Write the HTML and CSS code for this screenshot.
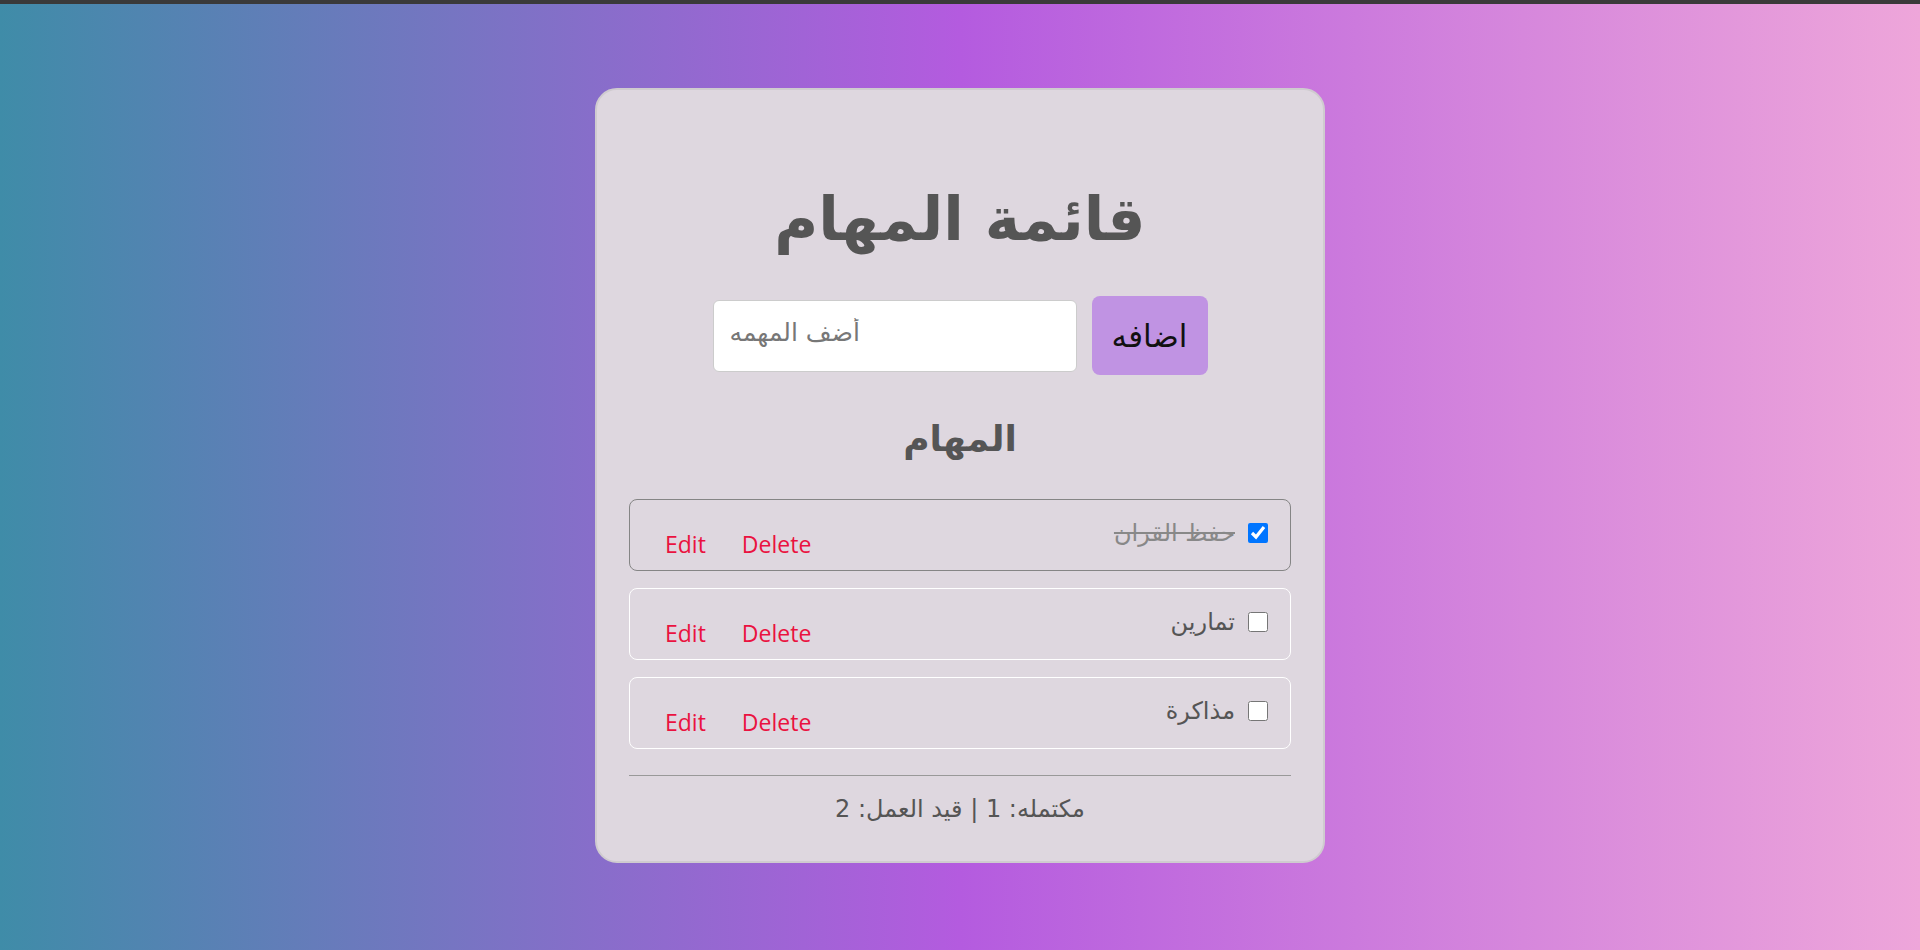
FILE: index.html
```html
<!DOCTYPE html>
<html lang="ar" dir="rtl">
<head>
<meta charset="utf-8">
<title>قائمة المهام</title>
<link rel="stylesheet" href="styles.css">
</head>
<body>
<div class="topbar"></div>
<main class="card">
  <h1 class="title">قائمة المهام</h1>
  <div class="add-row">
    <button class="add-btn">اضافه</button>
    <input class="task-input" type="text" placeholder="أضف المهمه">
  </div>
  <h2 class="subtitle">المهام</h2>
  <ul class="tasks">
    <li class="task done">
      <label class="task-label"><input type="checkbox" class="check" checked><span class="task-text">حفظ القران</span></label>
      <div class="actions"><button class="act">Edit</button><button class="act">Delete</button></div>
    </li>
    <li class="task">
      <label class="task-label"><input type="checkbox" class="check"><span class="task-text">تمارين</span></label>
      <div class="actions"><button class="act">Edit</button><button class="act">Delete</button></div>
    </li>
    <li class="task">
      <label class="task-label"><input type="checkbox" class="check"><span class="task-text">مذاكرة</span></label>
      <div class="actions"><button class="act">Edit</button><button class="act">Delete</button></div>
    </li>
  </ul>
  <hr class="divider">
  <p class="summary">مكتمله: 1 | قيد العمل: 2</p>
</main>
</body>
</html>
```
FILE: styles.css
```css
* { box-sizing: border-box; }
html, body { margin: 0; padding: 0; }
body {
  min-height: 100vh;
  background: linear-gradient(to right, #3f8ca8 0%, #b45bdf 50%, #eea6da 100%);
  font-family: "DejaVu Sans", "Open Sans", sans-serif;
  color: #555;
}
.topbar { height: 4px; background: #3a3a3a; }
.card {
  width: 730px;
  margin: 84px auto 0;
  background: #ded7df;
  border: 2px solid #cfcbcf;
  border-radius: 22px;
  padding: 32px 32px 35px;
  display: flex;
  flex-direction: column;
  align-items: center;
}
.title {
  margin: 56px 0 36px;
  font-size: 60px;
  line-height: 82px;
  font-weight: bold;
  color: #555;
}
.add-row {
  display: flex;
  align-items: center;
  gap: 15px;
}
.task-input {
  width: 364px;
  height: 72px;
  border: 1px solid #cccccc;
  border-radius: 6px;
  background: #fff;
  padding: 0 16px 6px;
  font-family: "DejaVu Sans", sans-serif;
  font-size: 25px;
  color: #333;
  text-align: left;
  outline: none;
}
.task-input::placeholder { color: #777; }
.add-btn {
  width: 116px;
  height: 79px;
  border: none;
  border-radius: 8px;
  background: #c093e3;
  color: #111;
  font-family: "DejaVu Sans", sans-serif;
  font-size: 31px;
}
.subtitle {
  margin: 40px 0 36px;
  font-size: 36px;
  line-height: 48px;
  font-weight: bold;
  color: #555;
}
.tasks {
  list-style: none;
  margin: 0;
  padding: 0;
  width: 100%;
  display: flex;
  flex-direction: column;
  gap: 17px;
}
.task {
  height: 72px;
  border: 1px solid #ffffff;
  border-radius: 8px;
  display: flex;
  justify-content: space-between;
  align-items: flex-start;
  padding: 18px 22px 0 0;
}
.task.done { border-color: #858585; }
.task-label {
  display: flex;
  align-items: center;
  gap: 13px;
  font-size: 24px;
  line-height: 30px;
  color: #555;
}
.check {
  width: 20px;
  height: 20px;
  margin: 0;
}
.task.done .task-text {
  color: #888;
  text-decoration: line-through;
}
.actions {
  display: flex;
  flex-direction: row-reverse;
  gap: 36px;
  padding-top: 11px;
  padding-left: 35px;
}
.act {
  background: none;
  border: none;
  padding: 0;
  font-family: "Open Sans", sans-serif;
  font-size: 23px;
  line-height: 30px;
  color: #ea1240;
}
.divider {
  width: 100%;
  margin: 26px 0 0;
  border: none;
  border-top: 1px solid #999;
}
.summary {
  margin: 17px 0 0;
  font-size: 24px;
  line-height: 33px;
  color: #555;
}
```
